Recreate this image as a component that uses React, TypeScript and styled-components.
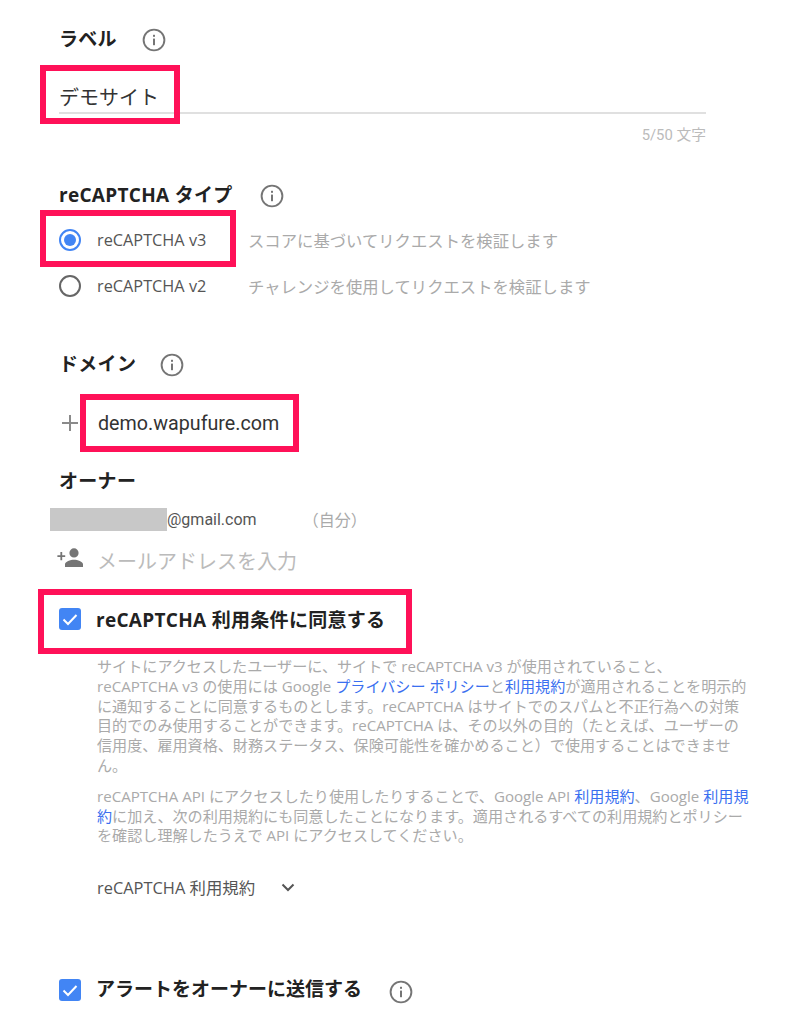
import React from 'react';
import styled, { createGlobalStyle } from 'styled-components';

const FONT = `Roboto, "Noto Sans CJK JP", sans-serif`;
const WIDE_FONT = `"Open Sans", "Noto Sans CJK JP", sans-serif`;

const GlobalStyle = createGlobalStyle`
  html, body {
    margin: 0;
    padding: 0;
    background: #fff;
    font-family: ${FONT};
  }
`;

const Page = styled.div`
  width: 800px;
  height: 1034px;
  overflow: hidden;
  padding: 24px 94px 0 59px;
  box-sizing: border-box;
`;

const Title = styled.div<{ $top?: number }>`
  display: flex;
  align-items: center;
  height: 28px;
  margin-top: ${({ $top }) => $top ?? 0}px;
  font-family: ${WIDE_FONT};
  font-size: 19px;
  font-weight: 700;
  letter-spacing: 0.3px;
  color: #222;
`;

const InfoWrap = styled.span<{ $gap: number }>`
  display: inline-flex;
  margin-left: ${({ $gap }) => $gap}px;
  margin-top: 3px;
`;

const Mark = styled.div<{ $t: number; $r: number; $b: number; $l: number }>`
  position: relative;
  display: inline-flex;
  align-items: center;
  &::after {
    content: '';
    position: absolute;
    top: ${({ $t }) => -$t}px;
    right: ${({ $r }) => -$r}px;
    bottom: ${({ $b }) => -$b}px;
    left: ${({ $l }) => -$l}px;
    border: 6px solid #ff1158;
    pointer-events: none;
  }
`;

const LabelField = styled.div`
  margin-top: 26px;
  padding-top: 2px;
  height: 32px;
  display: flex;
  align-items: center;
  border-bottom: 2px solid #e0e0e0;
  font-size: 20px;
  color: #333;
`;

const Counter = styled.div`
  margin-top: 12px;
  text-align: right;
  font-size: 14.8px;
  line-height: 18px;
  color: #bbb;
`;

const RadioGroup = styled.div`
  margin-top: 9px;
`;

const RadioRow = styled.div`
  display: flex;
  align-items: center;
  height: 46px;
  font-size: 16.35px;
`;

const RadioDot = styled.span<{ $on?: boolean }>`
  width: 22px;
  height: 22px;
  flex: none;
  box-sizing: border-box;
  border-radius: 50%;
  border: 2px solid ${({ $on }) => ($on ? '#4285f4' : '#666')};
  display: flex;
  align-items: center;
  justify-content: center;
  &::before {
    content: '';
    display: ${({ $on }) => ($on ? 'block' : 'none')};
    width: 12px;
    height: 12px;
    border-radius: 50%;
    background: #4285f4;
  }
`;

const RadioName = styled.span`
  width: 151px;
  margin-left: 16px;
  font-family: ${WIDE_FONT};
  font-size: 16.3px;
  color: #555;
`;

const RadioHint = styled.span`
  color: #aaa;
`;

const DomainRow = styled.div`
  display: flex;
  align-items: center;
  height: 40px;
  margin-top: 26px;
  font-size: 19.7px;
  color: #333;
`;

const PlusIcon = styled.span`
  display: inline-flex;
  width: 22px;
  justify-content: center;
  margin-right: 17px;
`;

const OwnerRow = styled.div`
  display: flex;
  align-items: center;
  height: 24px;
  margin-top: 13px;
  margin-left: -9px;
  font-size: 16px;
  color: #555;
`;

const Redacted = styled.span`
  width: 117px;
  height: 23px;
  background: #c8c8c8;
`;

const Self = styled.span`
  margin-left: 46px;
  color: #aaa;
`;

const AddRow = styled.div`
  display: flex;
  align-items: center;
  height: 30px;
  margin-top: 14px;
  font-size: 20px;
  color: #bbb;
`;

const AddIcon = styled.span`
  display: inline-flex;
  width: 40px;
  margin-left: -2px;
  margin-top: -4px;
`;

const CheckRow = styled.div<{ $top: number; $spaced?: boolean }>`
  display: flex;
  align-items: center;
  height: 24px;
  margin-top: ${({ $top }) => $top}px;
  font-family: ${WIDE_FONT};
  font-size: 19px;
  font-weight: 700;
  letter-spacing: ${({ $spaced }) => ($spaced ? '0.3px' : '0')};
  color: #222;
`;

const CheckBox = styled.span`
  width: 22px;
  height: 22px;
  flex: none;
  border-radius: 3px;
  background: #4285f4;
  display: flex;
  align-items: center;
  justify-content: center;
  margin-right: 15px;
`;

const RaisedText = styled.span`
  margin-top: -4px;
`;

const Legal = styled.div`
  margin: 26px 0 0 38px;
  font-family: ${WIDE_FONT};
  font-size: 15.1px;
  line-height: 19.8px;
  color: #aaa;
  width: 656px;
`;

const LegalPara = styled.p`
  margin: 0 0 11px;
`;

const Line = styled.span`
  display: block;
  white-space: nowrap;
`;

const Link = styled.a`
  color: #3a6ff0;
  text-decoration: none;
`;

const Terms = styled.div`
  display: flex;
  align-items: center;
  margin: 29px 0 0 38px;
  height: 24px;
  font-family: ${WIDE_FONT};
  font-size: 16.4px;
  color: #555;
`;

const TermsChevron = styled.span`
  display: inline-flex;
  margin-left: 21px;
`;

const Info = () => (
  <svg width="24" height="24" viewBox="0 0 24 24">
    <circle cx="12" cy="12" r="10.4" fill="none" stroke="#757575" strokeWidth="1.9" />
    <rect x="11" y="10.6" width="2" height="6.6" fill="#757575" />
    <rect x="11" y="6.8" width="2" height="2" fill="#757575" />
  </svg>
);

const Check = () => (
  <svg width="16" height="13" viewBox="0 0 16 13">
    <path d="M1.5 6.5 L6 11 L14.5 2" fill="none" stroke="#fff" strokeWidth="2" />
  </svg>
);

export default function App() {
  return (
    <Page>
      <GlobalStyle />
      <Title>
        ラベル<InfoWrap $gap={25}><Info /></InfoWrap>
      </Title>

      <LabelField>
        <Mark $t={17} $r={21} $b={13} $l={19}>デモサイト</Mark>
      </LabelField>
      <Counter>5/50 文字</Counter>

      <Title $top={36}>
        reCAPTCHA タイプ<InfoWrap $gap={27}><Info /></InfoWrap>
      </Title>
      <RadioGroup>
        <RadioRow>
          <Mark $t={19} $r={-12} $b={16} $l={19}>
            <RadioDot $on />
            <RadioName>reCAPTCHA v3</RadioName>
          </Mark>
          <RadioHint>スコアに基づいてリクエストを検証します</RadioHint>
        </RadioRow>
        <RadioRow>
          <RadioDot />
          <RadioName>reCAPTCHA v2</RadioName>
          <RadioHint>チャレンジを使用してリクエストを検証します</RadioHint>
        </RadioRow>
      </RadioGroup>

      <Title $top={40}>
        ドメイン<InfoWrap $gap={24}><Info /></InfoWrap>
      </Title>
      <DomainRow>
        <PlusIcon>
          <svg width="18" height="18" viewBox="0 0 18 18">
            <path d="M9 1 V17 M1 9 H17" stroke="#8a8a8a" strokeWidth="2" />
          </svg>
        </PlusIcon>
        <Mark $t={18} $r={20} $b={17} $l={18}>demo.wapufure.com</Mark>
      </DomainRow>

      <Title $top={23}>オーナー</Title>
      <OwnerRow>
        <Redacted />
        @gmail.com
        <Self>（自分）</Self>
      </OwnerRow>
      <AddRow>
        <AddIcon>
          <svg width="28" height="24" viewBox="0 0 28 24">
            <path fill="#757575" d="M17 11.5a4.6 4.6 0 1 0 0-9.2 4.6 4.6 0 0 0 0 9.2zm0 2.2c-3.5 0-9 1.8-9 4.6V21h18v-2.7c0-2.8-5.5-4.6-9-4.6z" />
            <path fill="#757575" d="M5.2 9.2V6H3.4v3.2H.4V11h3v3.2h1.8V11h3V9.2z" />
          </svg>
        </AddIcon>
        メールアドレスを入力
      </AddRow>

      <CheckRow $top={32} $spaced>
        <Mark $t={16} $r={27} $b={21} $l={21}>
          <CheckBox><Check /></CheckBox>
          reCAPTCHA 利用条件に同意する
        </Mark>
      </CheckRow>

      <Legal>
        <LegalPara>
          <Line>サイトにアクセスしたユーザーに、サイトで reCAPTCHA v3 が使用されていること、</Line>
          <Line>reCAPTCHA v3 の使用には Google <Link>プライバシー ポリシー</Link>と<Link>利用規約</Link>が適用されることを明示的</Line>
          <Line>に通知することに同意するものとします。reCAPTCHA はサイトでのスパムと不正行為への対策</Line>
          <Line>目的でのみ使用することができます。reCAPTCHA は、その以外の目的（たとえば、ユーザーの</Line>
          <Line>信用度、雇用資格、財務ステータス、保険可能性を確かめること）で使用することはできませ</Line>
          <Line>ん。</Line>
        </LegalPara>
        <LegalPara>
          <Line>reCAPTCHA API にアクセスしたり使用したりすることで、Google API <Link>利用規約</Link>、Google <Link>利用規</Link></Line>
          <Line><Link>約</Link>に加え、次の利用規約にも同意したことになります。適用されるすべての利用規約とポリシー</Line>
          <Line>を確認し理解したうえで API にアクセスしてください。</Line>
        </LegalPara>
      </Legal>

      <Terms>
        reCAPTCHA 利用規約
        <TermsChevron>
          <svg width="24" height="24" viewBox="0 0 24 24">
            <path d="M6.5 9.5 L12 15 L17.5 9.5" fill="none" stroke="#555" strokeWidth="2" />
          </svg>
        </TermsChevron>
      </Terms>

      <CheckRow $top={79}>
        <CheckBox><Check /></CheckBox>
        <RaisedText>アラートをオーナーに送信する</RaisedText>
        <InfoWrap $gap={27}><Info /></InfoWrap>
      </CheckRow>
    </Page>
  );
}
